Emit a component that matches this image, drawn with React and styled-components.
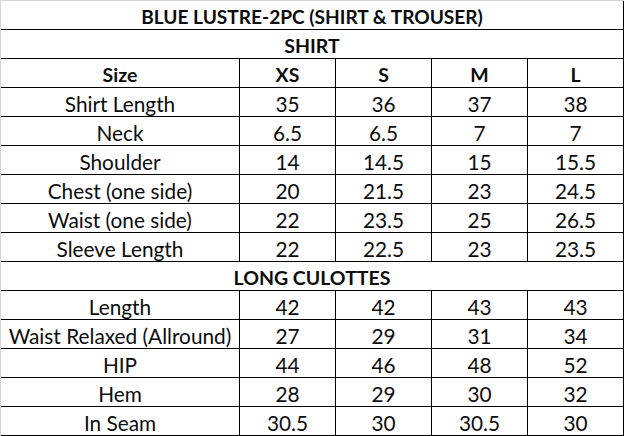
import React from "react";
import styled, { createGlobalStyle } from "styled-components";

const Global = createGlobalStyle`
  html, body { margin: 0; padding: 0; background: #ffffff; }
  #root { width: 624px; }
`;

const Sheet = styled.div`
  display: grid;
  grid-template-columns: 238px repeat(4, 95px);
  grid-auto-rows: 28px;
  gap: 1px;
  width: 624px;
  box-sizing: border-box;
  background: #000000;
  border-top: 1px solid #d4d4d4;
  border-left: 1px solid #d4d4d4;
  padding: 0 1px 1px 0;
  font-family: Lato, "Liberation Sans", sans-serif;
  color: #0c0c0c;
`;

const Cell = styled.div`
  background: #ffffff;
  display: flex;
  align-items: center;
  justify-content: center;
  padding-top: 3px;
  box-sizing: border-box;
  white-space: nowrap;
  font-size: ${(p) => (p.$title ? "19.1px" : p.$bold ? "19.5px" : "20.8px")};
  font-weight: ${(p) => (p.$bold ? 700 : 400)};
  grid-column: ${(p) => (p.$full ? "1 / -1" : "auto")};
`;

const sizes = ["XS", "S", "M", "L"];

const shirt = [
  ["Shirt Length", "35", "36", "37", "38"],
  ["Neck", "6.5", "6.5", "7", "7"],
  ["Shoulder", "14", "14.5", "15", "15.5"],
  ["Chest (one side)", "20", "21.5", "23", "24.5"],
  ["Waist (one side)", "22", "23.5", "25", "26.5"],
  ["Sleeve Length", "22", "22.5", "23", "23.5"],
];

const culottes = [
  ["Length", "42", "42", "43", "43"],
  ["Waist Relaxed (Allround)", "27", "29", "31", "34"],
  ["HIP", "44", "46", "48", "52"],
  ["Hem", "28", "29", "30", "32"],
  ["In Seam", "30.5", "30", "30.5", "30"],
];

const Rows = ({ data }) =>
  data.map((row) =>
    row.map((v, i) => <Cell key={row[0] + i}>{v}</Cell>)
  );

export default function App() {
  return (
    <>
      <Global />
      <Sheet>
        <Cell $full $bold $title>BLUE LUSTRE-2PC (SHIRT &amp; TROUSER)</Cell>
        <Cell $full $bold>SHIRT</Cell>
        <Cell $bold>Size</Cell>
        {sizes.map((s) => (
          <Cell $bold key={s}>{s}</Cell>
        ))}
        <Rows data={shirt} />
        <Cell $full $bold>LONG CULOTTES</Cell>
        <Rows data={culottes} />
      </Sheet>
    </>
  );
}
